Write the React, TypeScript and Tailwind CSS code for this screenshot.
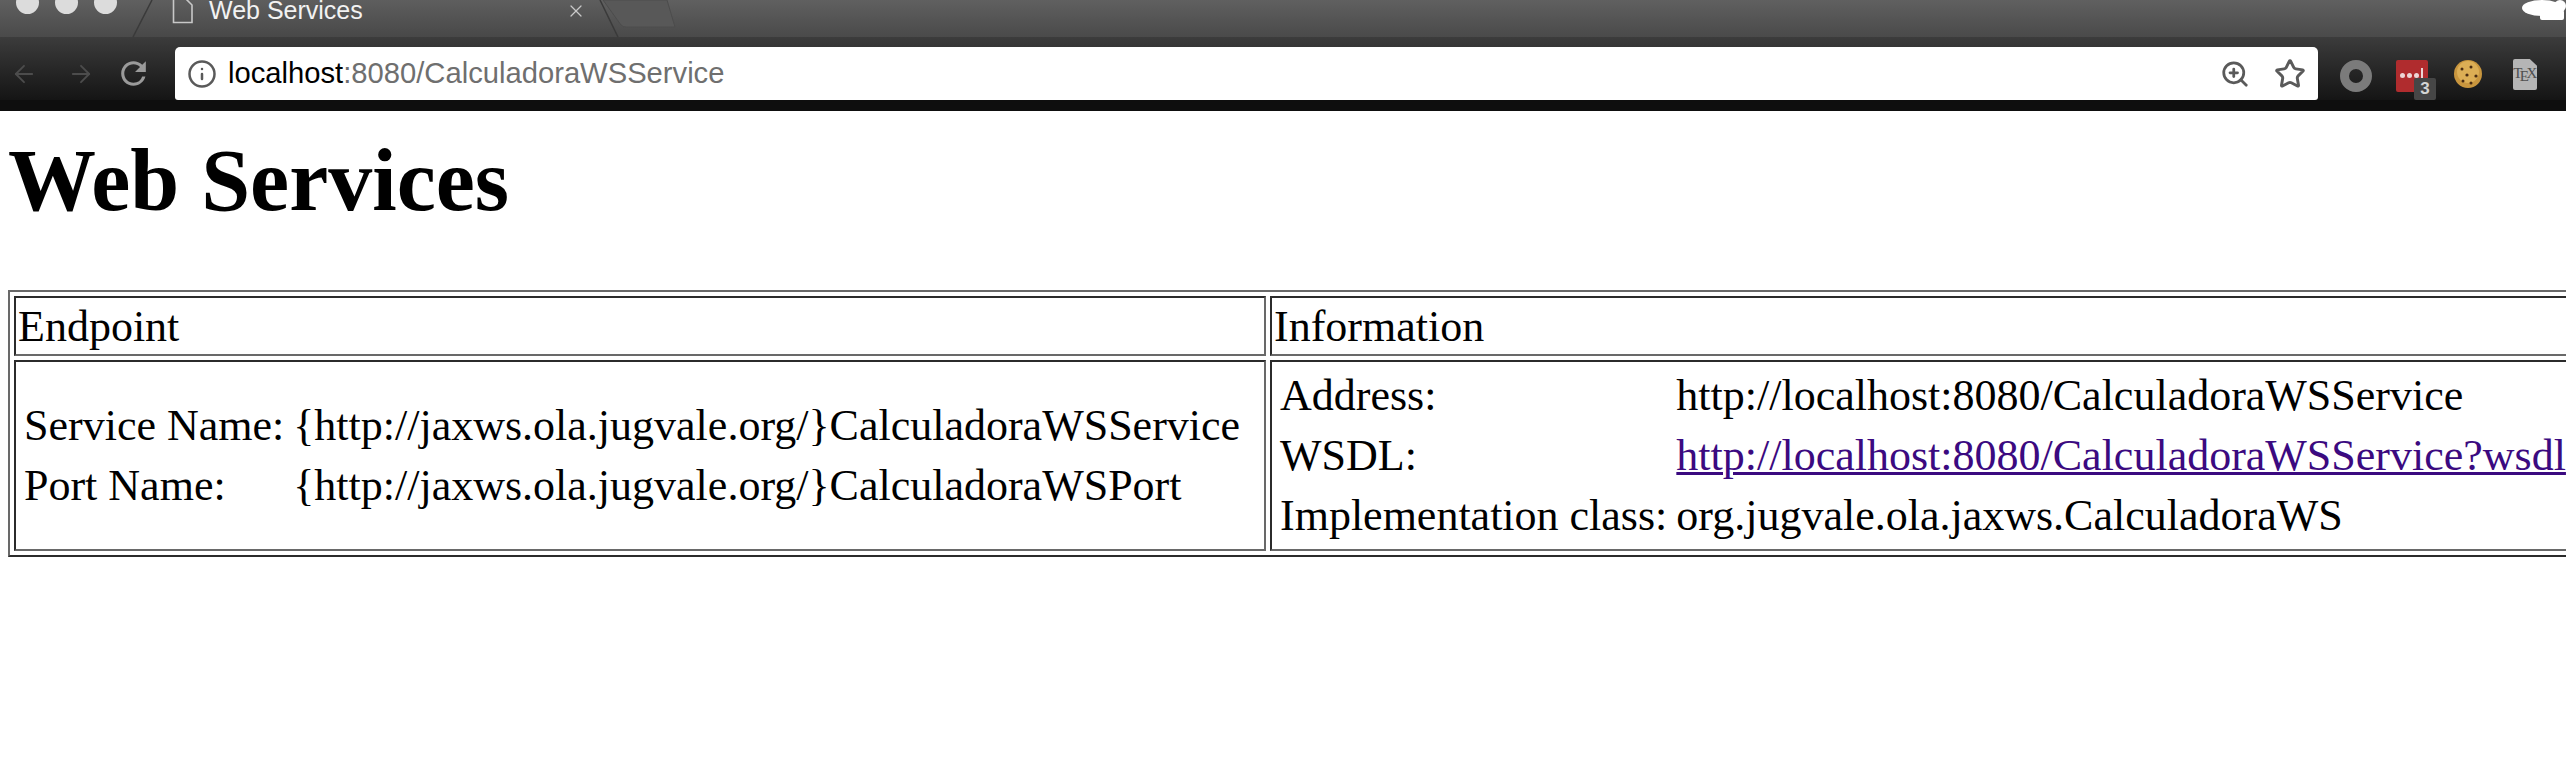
import { ArrowLeft, ArrowRight, Info, ZoomIn, Star, X } from "lucide-react";

const serif = "font-['Liberation_Serif','Times_New_Roman',serif]";

function TabShape() {
  return (
    <svg className="absolute left-[130px] top-0" width="560" height="37" viewBox="0 0 560 37" fill="none">
      <path d="M473 0 L491 25 Q493 27 496 27 L545 27 L537 0 Z" fill="#585858" stroke="#4c4c4c" />
      <path d="M3 37 L22 0 L470 0 L488 37 Z" fill="url(#tabg)" />
      <path d="M3 37 L22 0 M470 0 L488 37" stroke="#3a3a3a" strokeWidth="1.5" />
      <defs>
        <linearGradient id="tabg" x1="0" y1="0" x2="0" y2="1">
          <stop offset="0" stopColor="#5e5e5e" />
          <stop offset="1" stopColor="#484848" />
        </linearGradient>
      </defs>
    </svg>
  );
}

function Extensions() {
  return (
    <div className="flex items-center ml-[22px] h-full">
      <div className="w-8 h-8 rounded-full border-[9px] border-[#7b7b7b] mt-1" />
      <div className="relative ml-[24px] w-8 h-8 rounded-[2px] bg-[#b02c2e] mt-1 flex items-center pl-[4px] gap-[2px]">
        <span className="w-[5px] h-[5px] rounded-full bg-[#ecd5d5]" />
        <span className="w-[5px] h-[5px] rounded-full bg-[#ecd5d5]" />
        <span className="w-[5px] h-[5px] rounded-full bg-[#ecd5d5]" />
        <span className="w-[2px] h-[11px] bg-[#ecd5d5] -mt-[4px]" />
        <span className="absolute left-[18px] top-[18px] w-[22px] h-[22px] rounded-[2px] bg-[#464646] text-[#d4d4d4] text-[17px] leading-[22px] text-center font-bold font-['Liberation_Sans',sans-serif]">3</span>
      </div>
      <svg className="ml-[25px] mt-[1px]" width="30" height="30" viewBox="0 0 30 30">
        <circle cx="15" cy="15" r="14" fill="#c9963e" />
        <circle cx="15" cy="13" r="11" fill="#dcae55" />
        <circle cx="9" cy="10" r="1.5" fill="#4a2c12" />
        <circle cx="18" cy="8" r="1.5" fill="#4a2c12" />
        <circle cx="14" cy="16" r="1.6" fill="#4a2c12" />
        <circle cx="23" cy="17" r="1.6" fill="#4a2c12" />
        <circle cx="10" cy="22" r="1.5" fill="#4a2c12" />
        <circle cx="18" cy="24" r="1.5" fill="#4a2c12" />
      </svg>
      <div className={`ml-[30px] mt-[2px] w-[24px] h-[31px] bg-[#b5b5b5] rounded-[2px] [clip-path:polygon(0_0,70%_0,100%_22%,100%_100%,0_100%)] text-[#4e4e4e] text-[15px] leading-[28px] tracking-[-2.5px] flex justify-center pr-[2px] ${serif}`}>
        <span>T</span>
        <span className="relative top-[3px]">E</span>
        <span>X</span>
      </div>
    </div>
  );
}

function Chrome() {
  return (
    <div className="font-['Liberation_Sans',Arial,sans-serif]">
      <div className="relative h-[37px] overflow-hidden bg-gradient-to-b from-[#606060] to-[#4a4a4a]">
        <TabShape />
        <div className="relative flex items-start h-full">
          <div className="flex gap-4 pl-4 -mt-[9px]">
            <span className="w-[23px] h-[23px] rounded-full bg-[#dcdcdc]" />
            <span className="w-[23px] h-[23px] rounded-full bg-[#dcdcdc]" />
            <span className="w-[23px] h-[23px] rounded-full bg-[#dcdcdc]" />
          </div>
          <svg className="ml-[55px] -mt-[2px] shrink-0" width="22" height="26" viewBox="0 0 22 26" fill="none" stroke="#c8c8c8" strokeWidth="1.6">
            <path d="M1.5 0V24.5H20V7L13 0Z" />
          </svg>
          <span className="ml-[15px] text-[25px] leading-[20px] text-[#f2f2f2]">Web Services</span>
          <X className="ml-[203px] mt-[1px] text-[#c9c9c9]" size={20} strokeWidth={1.5} />
        </div>
        <svg className="absolute right-0 top-0" width="44" height="21" viewBox="0 0 44 21" fill="#fff">
          <ellipse cx="20" cy="8" rx="20" ry="8" />
          <rect x="18" y="10" width="24" height="10" rx="2" />
          <ellipse cx="38" cy="6" rx="6" ry="6" />
        </svg>
      </div>
      <div className="h-[63px] pt-[10px] flex bg-gradient-to-b from-[#3c3c3c] to-[#151515] items-stretch">
        <div className="flex items-center w-[175px] pl-[10px] text-[#4c4c4c]">
          <ArrowLeft size={28} strokeWidth={1.6} />
          <ArrowRight className="ml-[29px]" size={28} strokeWidth={1.6} />
          <svg className="ml-[20px] shrink-0" width="37" height="37" viewBox="0 0 24 24" fill="#9a9a9a">
            <path d="M17.65 6.35A7.958 7.958 0 0 0 12 4c-4.42 0-7.99 3.58-7.99 8s3.57 8 7.99 8c3.73 0 6.84-2.55 7.73-6h-2.08A5.99 5.99 0 0 1 12 18c-3.31 0-6-2.69-6-6s2.69-6 6-6c1.66 0 3.14.69 4.22 1.78L13 11h7V4l-2.35 2.35z" />
          </svg>
        </div>
        <div className="w-[2143px] bg-white rounded-t-[5px] rounded-b-[3px] flex items-center pl-[12px] pr-3 text-[#5a5a5a]">
          <Info size={30} strokeWidth={2} />
          <span className="ml-[11px] text-[29.2px] text-[#6f6f6f]">
            <span className="text-black">localhost</span>:8080/CalculadoraWSService
          </span>
          <ZoomIn className="ml-auto" size={30} strokeWidth={2.2} />
          <Star className="ml-[24px]" size={32} strokeWidth={2.2} />
        </div>
        <Extensions />
      </div>
      <div className="h-[11px] bg-[#0e0e0e]" />
    </div>
  );
}

const cell = "border-2 border-t-[#2b2b2b] border-l-[#2b2b2b] border-b-[#696969] border-r-[#696969] p-[2px] text-left font-normal align-middle";
const inner = "p-[3px] whitespace-nowrap";

function Endpoint() {
  return (
    <table className="border-separate border-spacing-[3px]">
      <tbody>
        <tr>
          <td className={inner}>Service Name:</td>
          <td className={inner}>{"{http://jaxws.ola.jugvale.org/}CalculadoraWSService"}</td>
        </tr>
        <tr>
          <td className={inner}>Port Name:</td>
          <td className={inner}>{"{http://jaxws.ola.jugvale.org/}CalculadoraWSPort"}</td>
        </tr>
      </tbody>
    </table>
  );
}

function Information() {
  return (
    <table className="border-separate border-spacing-[3px]">
      <tbody>
        <tr>
          <td className={inner}>Address:</td>
          <td className={inner}>http://localhost:8080/CalculadoraWSService</td>
        </tr>
        <tr>
          <td className={inner}>WSDL:</td>
          <td className={inner}>
            <a className="text-[#3b0a80] underline decoration-[3px]" href="#">http://localhost:8080/CalculadoraWSService?wsdl</a>
          </td>
        </tr>
        <tr>
          <td className={inner}>Implementation class:</td>
          <td className={inner}>org.jugvale.ola.jaxws.CalculadoraWS</td>
        </tr>
      </tbody>
    </table>
  );
}

export default function App() {
  return (
    <div className={`h-[778px] w-[2566px] overflow-hidden bg-white text-black ${serif}`}>
      <Chrome />
      <div className="pl-[8px]">
        <h1 className="text-[88px] leading-[101px] font-bold pt-[19px] pb-[59px] whitespace-nowrap">Web Services</h1>
        <table className="w-max border-separate border-spacing-[4px] border-2 border-t-[#696969] border-l-[#696969] border-b-[#2b2b2b] border-r-[#2b2b2b] text-[44px] leading-[51px]">
          <thead>
            <tr>
              <th className={`${cell} h-[60px] w-[1252px] min-w-[1252px]`}>Endpoint</th>
              <th className={cell}>Information</th>
            </tr>
          </thead>
          <tbody>
            <tr>
              <td className={cell}><Endpoint /></td>
              <td className={cell}><Information /></td>
            </tr>
          </tbody>
        </table>
      </div>
    </div>
  );
}
